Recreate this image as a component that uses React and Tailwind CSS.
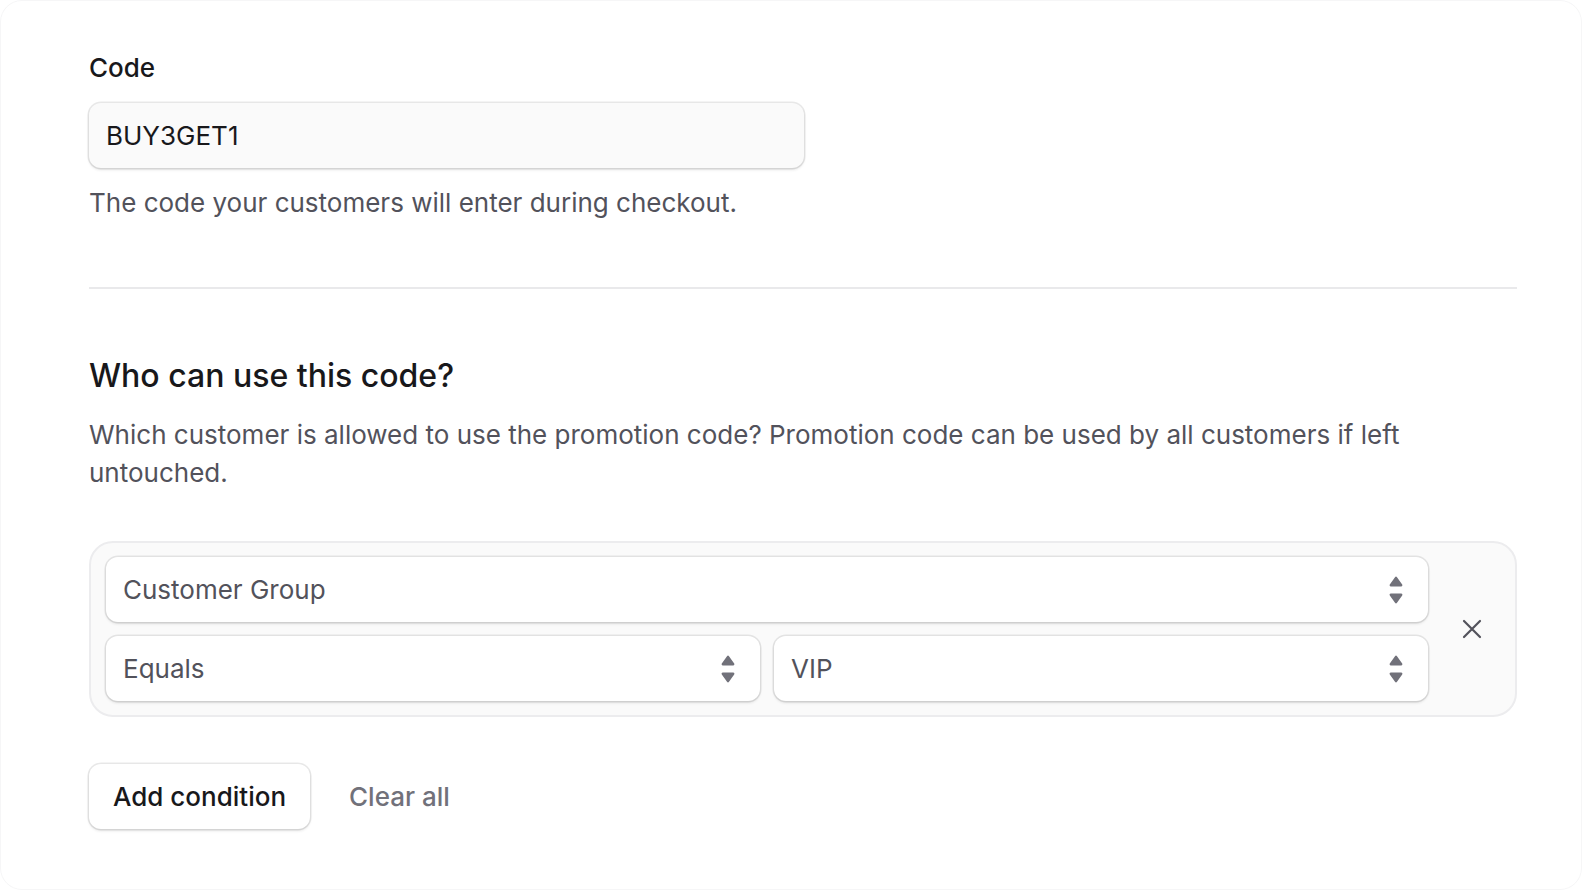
import React from "react";

function UpDown() {
  return (
    <svg width="16" height="30" viewBox="0 0 16 30" fill="#71717a">
      <path d="M7 2.2a1.2 1.2 0 0 1 2 0l5.2 7.4c.5.8 0 1.8-1 1.8H2.8c-1 0-1.5-1-1-1.8z" />
      <path d="M7 27.8a1.2 1.2 0 0 0 2 0l5.2-7.4c.5-.8 0-1.8-1-1.8H2.8c-1 0-1.5 1-1 1.8z" />
    </svg>
  );
}

function Select({ value, className = "" }) {
  return (
    <div
      className={
        "flex h-[65px] items-center justify-between rounded-[12px] bg-white pl-[17px] pr-[24px] text-[26px] text-[#52525b] shadow-[0_0_0_1.5px_rgba(0,0,0,0.09),0_2px_3px_rgba(0,0,0,0.1)] " +
        className
      }
    >
      <span>{value}</span>
      <UpDown />
    </div>
  );
}

export default function App() {
  return (
    <div className="h-[890px] w-full overflow-hidden bg-white font-['Inter','Noto_Sans',sans-serif]">
      <div className="h-[890px] w-full rounded-[22px] border border-[#f6f6f7] pl-[88px] pr-[64px] pt-[50px]">
        {/* CODE */}
        <div className="text-[26px] font-medium leading-[34px] text-[#18181b]">Code</div>
        <div className="mt-[18px] flex h-[65px] w-[715px] items-center rounded-[12px] bg-[#fafafa] px-[17px] text-[26px] text-[#18181b] shadow-[0_0_0_1.5px_rgba(0,0,0,0.09),0_2px_3px_rgba(0,0,0,0.1)]">
          BUY3GET1
        </div>
        <p className="mt-[15px] text-[26px] leading-[40px] text-[#52525b]">
          The code your customers will enter during checkout.
        </p>

        <div className="mt-[64px] h-[2px] w-full bg-[#e9e9eb]" />

        {/* WHO */}
        <h2 className="mt-[65px] text-[32px] font-medium leading-[44px] text-[#18181b]">
          Who can use this code?
        </h2>
        <p className="mt-[18px] text-[26px] leading-[38px] text-[#52525b]">
          Which customer is allowed to use the promotion code? Promotion code can be used by all
          customers if left untouched.
        </p>

        {/* CONDITION */}
        <div className="mt-[49px] flex rounded-[24px] border-2 border-[#ececee] bg-[#fafafa] py-[14px] pl-[15px]">
          <div className="flex flex-1 flex-col gap-[14px]">
            <Select value="Customer Group" />
            <div className="flex gap-[14px]">
              <Select value="Equals" className="flex-1" />
              <Select value="VIP" className="flex-1" />
            </div>
          </div>
          <div className="flex w-[87px] items-center justify-center">
            <svg width="22" height="22" viewBox="0 0 22 22" fill="none" stroke="#52525b" strokeWidth="2.2" strokeLinecap="round">
              <path d="M3 3l16 16M19 3L3 19" />
            </svg>
          </div>
        </div>

        {/* ACTIONS */}
        <div className="mt-[47px] flex items-center gap-[39px]">
          <button className="h-[65px] rounded-[12px] bg-white px-[24px] text-[26px] font-medium text-[#18181b] shadow-[0_0_0_1.5px_rgba(0,0,0,0.09),0_2px_3px_rgba(0,0,0,0.1)]">
            Add condition
          </button>
          <button className="text-[26px] font-medium text-[#71717a]">Clear all</button>
        </div>
      </div>
    </div>
  );
}
